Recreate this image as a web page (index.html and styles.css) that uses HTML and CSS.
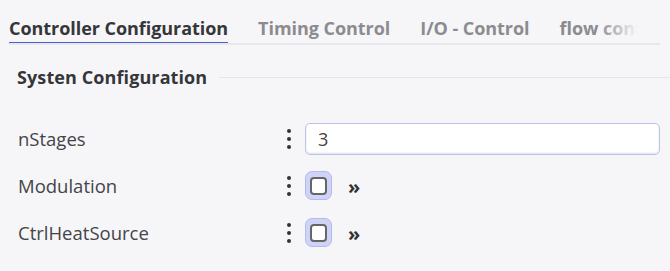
FILE: index.html
```html
<!DOCTYPE html>
<html lang="en">

<head>
  <meta charset="UTF-8">
  <meta name="viewport" content="width=device-width, initial-scale=1.0">
  <title>Controller Configuration</title>
  <link rel="stylesheet" href="styles.css">
</head>

<body>
  <!-- Abas -->
  <div class="tabs">
    <div class="tab active">Controller Configuration</div>
    <div class="tab">Timing Control</div>
    <div class="tab">I/O - Control</div>
    <div class="tab">flow control</div>
  </div>

  <!-- Secao -->
  <div class="section-title">Systen Configuration</div>

  <div class="fields">
    <div class="field-row">
      <div class="field-label">nStages</div>
      <div class="dots"><span></span><span></span><span></span></div>
      <input class="text-input" type="text" value="3">
    </div>
    <div class="field-row">
      <div class="field-label">Modulation</div>
      <div class="dots"><span></span><span></span><span></span></div>
      <div class="check-wrap">
        <div class="check-halo"><div class="check-box"></div></div>
        <span class="more">&raquo;</span>
      </div>
    </div>
    <div class="field-row">
      <div class="field-label">CtrlHeatSource</div>
      <div class="dots"><span></span><span></span><span></span></div>
      <div class="check-wrap">
        <div class="check-halo"><div class="check-box"></div></div>
        <span class="more">&raquo;</span>
      </div>
    </div>
  </div>
</body>

</html>
```

FILE: styles.css
```css
/* Estilos Gerais */
body {
  margin: 0;
  background-color: #f6f6f9;
  font-family: "Open Sans", "Noto Sans", sans-serif;
  color: #3a3a3e;
  overflow: hidden;
}

/* Abas */
.tabs {
  display: flex;
  gap: 30px;
  width: 651px;
  margin-left: 9px;
  border-bottom: 2px solid #e8e8ec;
  overflow: hidden;
  position: relative;
  white-space: nowrap;
}

/* Degrade sobre a ultima aba cortada */
.tabs::after {
  content: "";
  position: absolute;
  top: 0;
  right: 0;
  width: 62px;
  height: 41px;
  background: linear-gradient(to right, rgba(246, 246, 249, 0), #f6f6f9 65%);
}

.tab {
  padding: 16px 0 2px;
  margin-bottom: -2px;
  font-size: 18px;
  line-height: 24px;
  font-weight: bold;
  letter-spacing: -0.05px;
  color: #8c8c90;
  border-bottom: 3px solid transparent;
}

.tab.active {
  color: #36363a;
  border-bottom-color: #4a5fc9;
}

/* Titulo da secao */
.section-title {
  display: flex;
  align-items: center;
  margin: 20px 0 26px 17px;
  font-size: 18px;
  line-height: 24px;
  font-weight: bold;
  letter-spacing: 0.1px;
  color: #36363a;
}

.section-title::after {
  content: "";
  flex: 1;
  height: 1px;
  margin-left: 12px;
  background-color: #e6e6ea;
}

/* Campos */
.field-row {
  display: grid;
  grid-template-columns: 255px 14px 1fr;
  column-gap: 9px;
  align-items: center;
  height: 47px;
  padding: 0 10px 0 18px;
}

.field-label {
  font-size: 18.5px;
  color: #444448;
}

.dots {
  display: flex;
  flex-direction: column;
  align-items: center;
  gap: 4px;
}

.dots span {
  width: 4px;
  height: 4px;
  border-radius: 50%;
  background-color: #333;
}

.text-input {
  box-sizing: border-box;
  width: 100%;
  height: 32px;
  margin: 0;
  padding: 0 12px;
  border: 1px solid #bcc4ea;
  border-radius: 5px;
  background-color: #fff;
  box-shadow: inset 0 -1px 2px rgba(120, 130, 190, 0.25);
  font-family: inherit;
  font-size: 18px;
  color: #444;
  outline: none;
}

.check-wrap {
  display: flex;
  align-items: center;
  gap: 16px;
}

.check-halo {
  box-sizing: border-box;
  width: 27px;
  height: 29px;
  padding: 4px;
  border: 1px solid #b3bbee;
  border-radius: 7px;
  background-color: #cfd4f6;
  display: flex;
  align-items: center;
  justify-content: center;
}

.check-box {
  box-sizing: border-box;
  width: 19px;
  height: 18px;
  border: 2px solid #666;
  border-radius: 4px;
  background-color: #fff;
}

.more {
  font-size: 20px;
  font-weight: bold;
  color: #333;
  line-height: 20px;
  margin-top: 2px;
}
```
